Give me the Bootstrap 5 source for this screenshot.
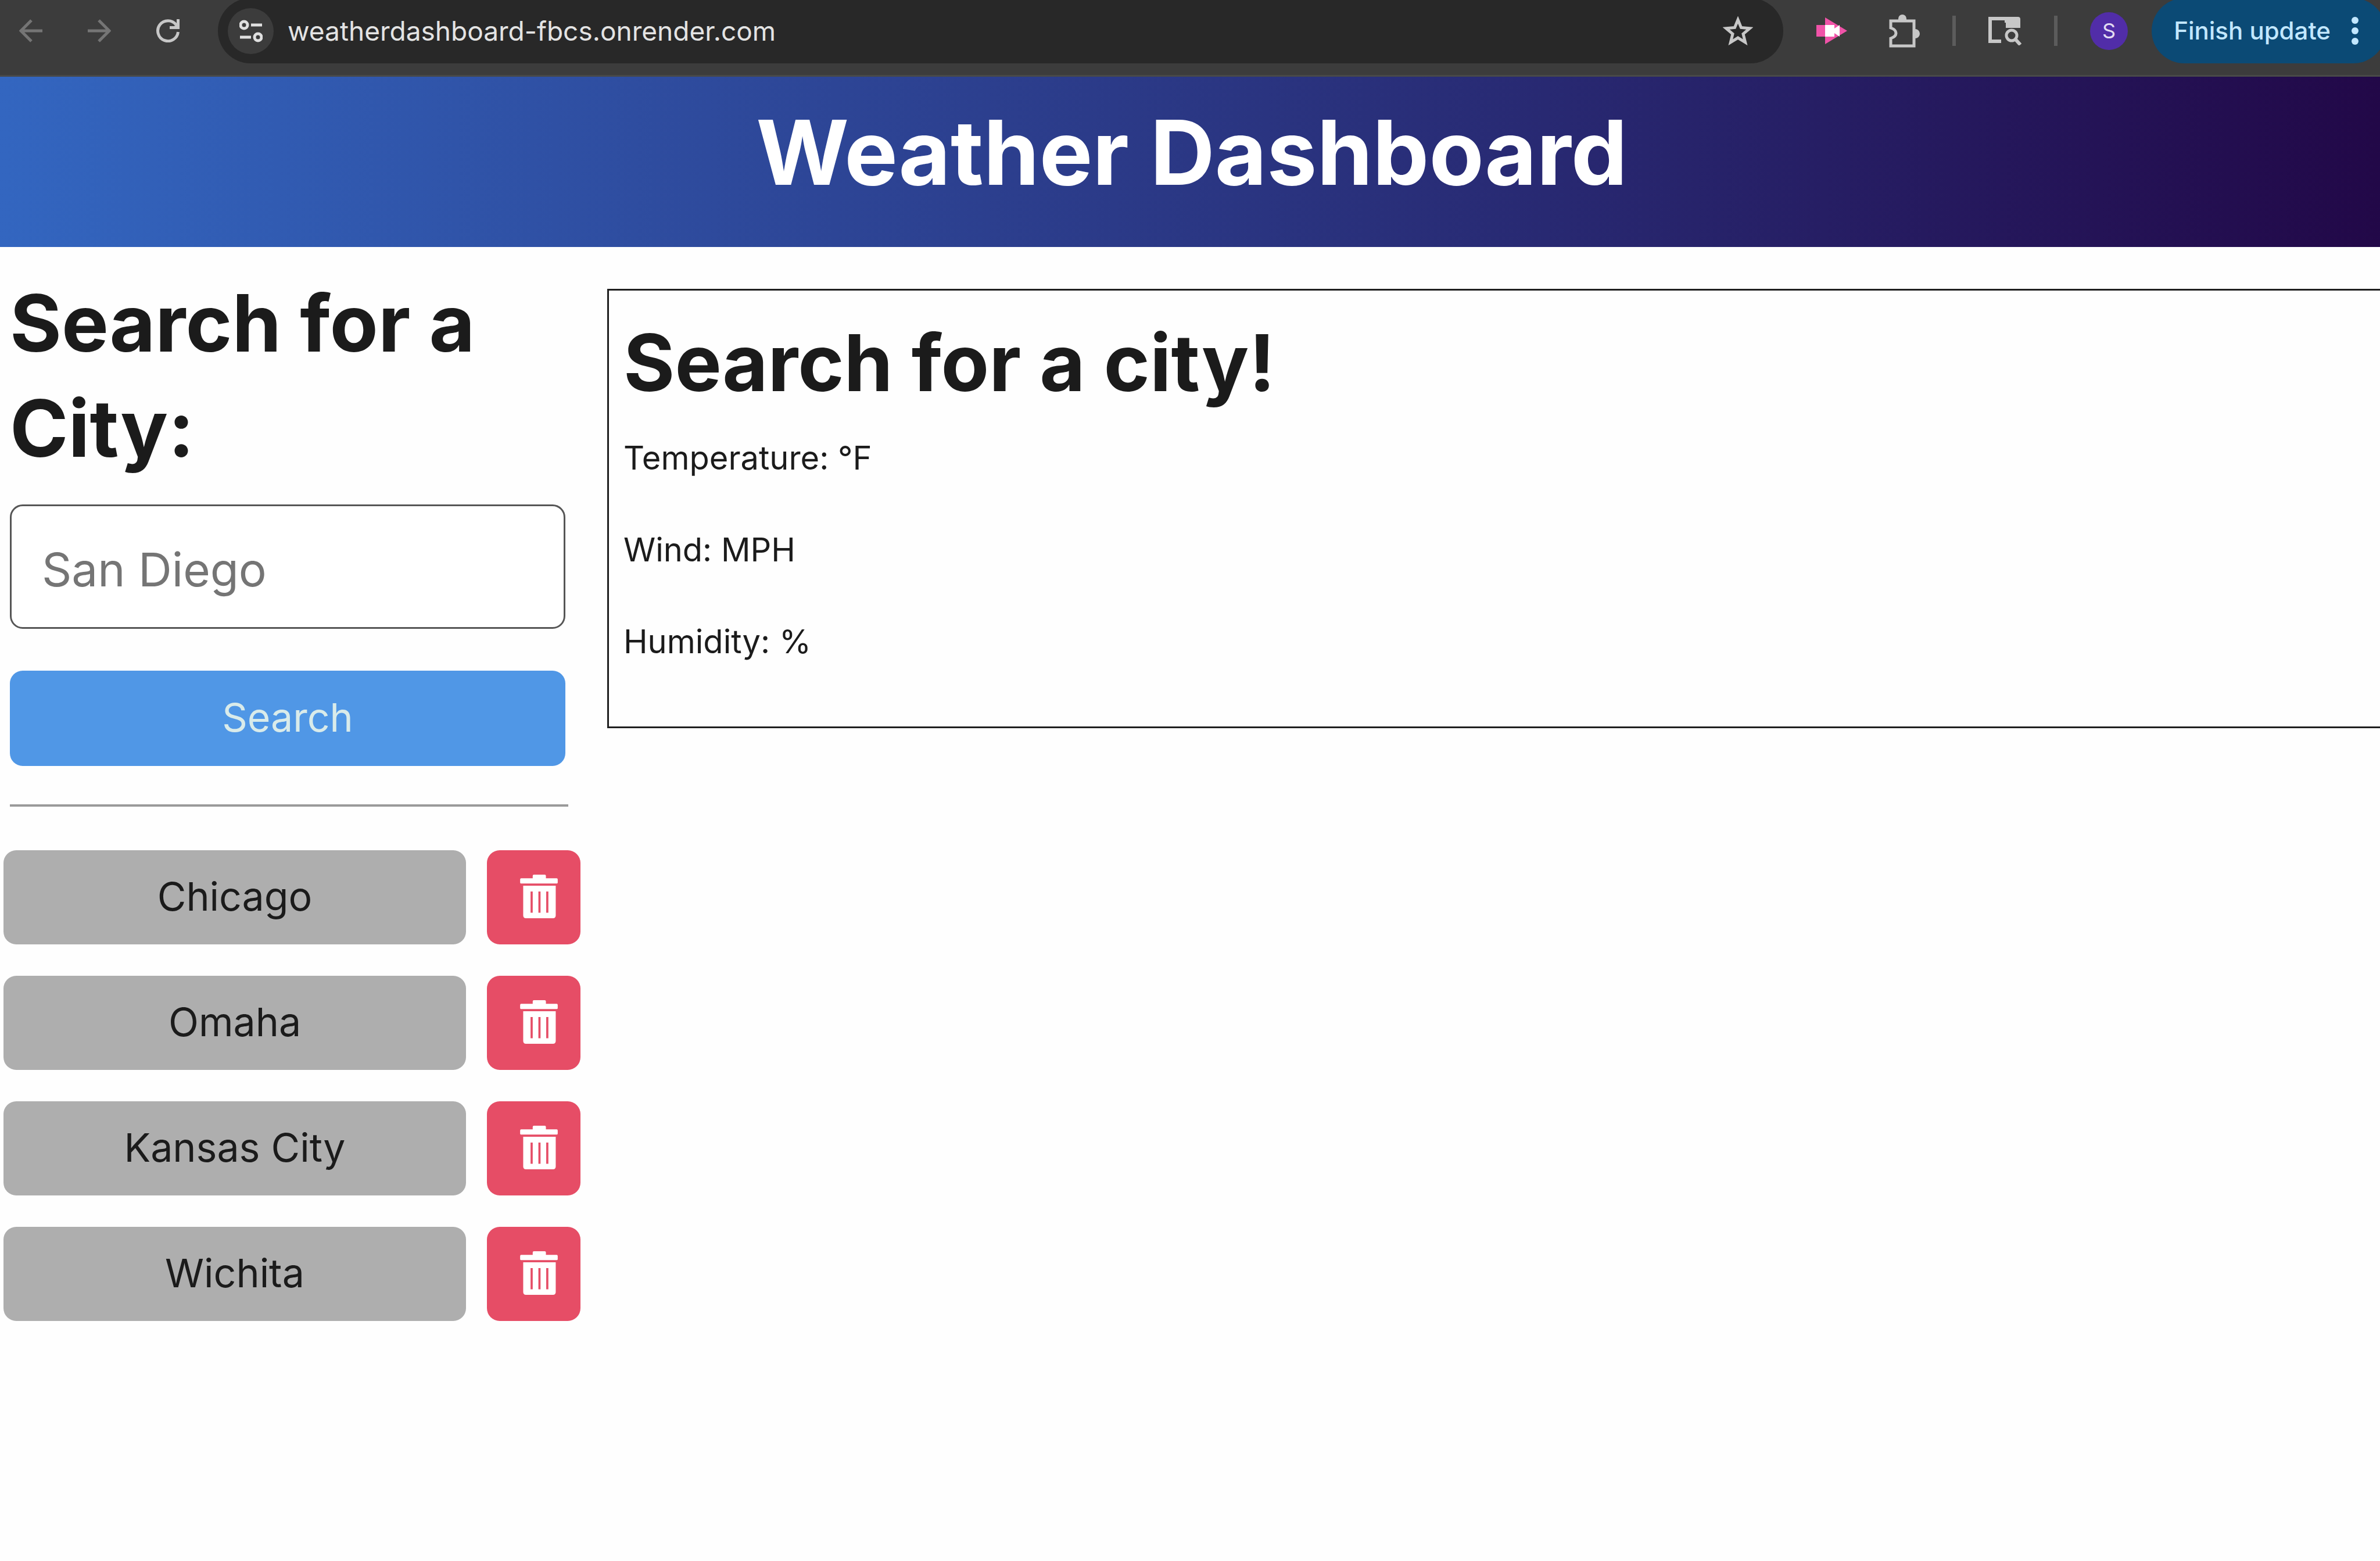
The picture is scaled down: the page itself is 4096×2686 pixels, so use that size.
<!DOCTYPE html>
<html lang="en">
<head>
<meta charset="utf-8">
<meta name="viewport" content="width=device-width, initial-scale=1">
<title>Weather Dashboard</title>
<link href="https://cdn.jsdelivr.net/npm/bootstrap@5.3.0/dist/css/bootstrap.min.css" rel="stylesheet">
<style>
  body { font-family: Inter, "Liberation Sans", sans-serif; color: #1b1b1b; background: #fefefe; }
  svg { display: block; }

  /* browser toolbar */
  .toolbar { background: #3c3c3c; border-bottom: 3px solid #484948; padding-bottom: 20px; }
  .toolbar-row { height: 112px; margin-top: -3px; padding-left: 33px; }
  .tool-btn { background: none; border: 0; padding: 0; flex: none; color: #c7c7c7; }
  .tool-btn.dim { color: #757575; }
  .nav-tools { gap: 78px; margin-right: 66px; }
  .address { height: 112px; border-radius: 56px; background: #282828; padding: 0 52px 0 17px; gap: 24px; }
  .site-info { width: 79px; height: 79px; border-radius: 50%; background: #3c3c3c; color: #e0e0e0; }
  .address input { min-width: 0; background: none; border: 0; padding: 0; outline: 0; color: #e3e3e3; font-size: 46px; line-height: 60px; }
  .ext-tools { gap: 56px; margin-left: 57px; margin-right: 41px; }
  .tool-sep { width: 6px; height: 52px; background: #5c5c5c; }
  .avatar { width: 65px; height: 65px; border-radius: 50%; background: #512da8; color: #e2dcf2; font-size: 36px; line-height: 65px; }
  .update { height: 112px; border: 0; border-radius: 56px; background: #0b4a75; color: #c2e7ff; font-size: 42px; font-weight: 500; line-height: 60px; padding: 0 47px 0 38px; gap: 36px; margin-right: -10px; }

  /* page */
  .hero { background: linear-gradient(90deg, #3366c0, #220848); padding: 38px 0 71px 6px; }
  .hero h1 { font-size: 154px; line-height: 184px; font-weight: 700; color: #fff; }
  .side { padding: 40px 25px 0 6px; }
  .side form { padding: 0 26px 0 11px; }
  .side h2 { font-size: 136px; line-height: 181px; font-weight: 700; margin-bottom: 41px; }
  .city-input { height: 214px; border: 3px solid #565656; border-radius: 22px; padding: 8px 52px 0; font-size: 80px; line-height: 100px; margin-bottom: 72px; background: #fff; }
  .city-input::placeholder { color: #757575; opacity: 1; }
  .big-btn { border: 0; border-radius: 22px; font-size: 68px; line-height: 84px; height: 162px; padding: 0 0 4px; }
  .find-btn, .find-btn:hover { height: 164px; background: #5097e6; color: #d9ebea; }
  .side hr { margin: 66px 21px 75px 11px; border: 0; height: 4px; background: #9a9a9a; opacity: 1; }
  .past { gap: 54px; }
  .past-row { gap: 36px; }
  .city-btn, .city-btn:hover { background: #aeaeae; color: #1b1b1b; }
  .trash-btn, .trash-btn:hover { width: 161px; flex: none; background: #e64d66; color: #fff; padding-left: 18px; }
  .today { margin: 72px 0 0 21px; border: 3px solid #1f1f1f; border-right: 0; padding: 40px 25px 30px; }
  .today h2 { font-size: 135px; line-height: 168px; font-weight: 700; margin-bottom: 38px; }
  .today p { font-size: 56px; line-height: 84px; margin-bottom: 74px; }
</style>
<script src="https://cdn.jsdelivr.net/npm/bootstrap@5.3.0/dist/js/bootstrap.bundle.min.js" defer></script>
</head>
<body>

<svg width="0" height="0" class="position-absolute" aria-hidden="true">
  <symbol id="trash" viewBox="0 0 245 284">
    <path fill="currentColor" fill-rule="evenodd" d="M82 24V8q0-8 8-8h70q8 0 8 8v16h70q7 0 7 7v20q0 7-7 7H7q-7 0-7-7V31q0-7 7-7zM20 72h212v194q0 18-18 18H38q-18 0-18-18zM68 110v138h14V110zM119 110v138h14V110zM170 110v138h14V110z"/>
  </symbol>
</svg>

<div class="toolbar overflow-hidden">
  <div class="toolbar-row d-flex align-items-center">
    <div class="nav-tools d-flex align-items-center">
      <button class="tool-btn dim" type="button" aria-label="Back">
        <svg width="40" height="40" viewBox="0 0 40 40" fill="none" stroke="currentColor" stroke-width="5"><path d="M40 20H4M21 2 3 20l18 18"/></svg>
      </button>
      <button class="tool-btn dim" type="button" aria-label="Forward">
        <svg width="40" height="40" viewBox="0 0 40 40" fill="none" stroke="currentColor" stroke-width="5"><path d="M0 20h36M19 2l18 18-18 18"/></svg>
      </button>
      <button class="tool-btn" type="button" aria-label="Reload">
        <svg width="40" height="40" viewBox="0 0 40 40"><path d="M37.500 22A17.500 17.500 0 1 1 34 9.500" fill="none" stroke="currentColor" stroke-width="5"/><path d="M40 0v17H23v-5h8l4-4V0z" fill="currentColor"/></svg>
      </button>
    </div>

    <div class="address d-flex align-items-center flex-grow-1">
      <button class="tool-btn site-info d-flex align-items-center justify-content-center" type="button" aria-label="Site information">
        <svg width="40" height="40" viewBox="0 0 40 40" fill="none" stroke="currentColor" stroke-width="5"><circle cx="8" cy="10" r="6"/><path d="M20 10h19M1 31h19"/><circle cx="32" cy="31" r="6"/></svg>
      </button>
      <input class="flex-grow-1" type="text" value="weatherdashboard-fbcs.onrender.com" aria-label="Address">
      <button class="tool-btn" type="button" aria-label="Bookmark">
        <svg width="52" height="50" viewBox="0 0 52 50" fill="none" stroke="currentColor" stroke-width="5"><path d="m26 6 5.500 13.500 15 1.200-11.500 9.600 3.600 14.500L26 37l-12.600 7.800L17 30.300 5.500 20.700l15-1.200z"/></svg>
      </button>
    </div>

    <div class="ext-tools d-flex align-items-center">
      <button class="tool-btn" type="button" aria-label="Screen recorder">
        <svg width="53" height="46" viewBox="0 0 53 46"><path d="M0 13h15V0l38 23-38 23V33H0z" fill="#f053a8"/><path d="M15 13h16v6l9-6v20l-9-6v6H15z" fill="#fff"/></svg>
      </button>
      <button class="tool-btn ps-3" type="button" aria-label="Extensions">
        <svg width="53" height="58" viewBox="0 0 53 58"><path d="M3 12h40v43H3V42q9-3 9-9t-9-9z" fill="none" stroke="currentColor" stroke-width="5"/><path d="M16 10V8a7 7 0 0 1 14 0v2zM45 26a8 8 0 0 1 0 16z" fill="currentColor"/></svg>
      </button>
      <span class="tool-sep"></span>
      <button class="tool-btn" type="button" aria-label="Search tabs">
        <svg width="57" height="50" viewBox="0 0 57 50"><path d="M22 43H3V4h28" fill="none" stroke="currentColor" stroke-width="6"/><path d="M28 1h23q4 0 4 4v15H30v-9h-2z" fill="currentColor"/><circle cx="40" cy="33" r="9" fill="none" stroke="currentColor" stroke-width="5"/><path d="m46 39 9 10" stroke="currentColor" stroke-width="6"/></svg>
      </button>
      <span class="tool-sep"></span>
      <button class="tool-btn avatar text-center" type="button" aria-label="Profile S">S</button>
    </div>

    <button class="update d-flex align-items-center flex-shrink-0 text-nowrap" type="button">
      Finish update
      <svg width="12" height="48" viewBox="0 0 12 48" fill="currentColor"><circle cx="6" cy="6" r="6"/><circle cx="6" cy="24" r="6"/><circle cx="6" cy="42" r="6"/></svg>
    </button>
  </div>
</div>

<header class="hero text-center">
  <h1 class="m-0">Weather Dashboard</h1>
</header>

<main class="row g-0 overflow-hidden">
  <aside class="side col-3">
    <form>
      <h2><label for="city">Search for a City:</label></h2>
      <input class="city-input form-control" id="city" type="text" placeholder="San Diego">
      <button class="btn big-btn find-btn w-100" type="button">Search</button>
    </form>
    <hr>
    <div class="past d-flex flex-column">
      <div class="past-row d-flex">
        <button class="btn big-btn city-btn flex-grow-1" type="button">Chicago</button>
        <button class="btn big-btn trash-btn d-flex align-items-center justify-content-center" type="button" aria-label="Delete Chicago"><svg width="65" height="75"><use href="#trash"/></svg></button>
      </div>
      <div class="past-row d-flex">
        <button class="btn big-btn city-btn flex-grow-1" type="button">Omaha</button>
        <button class="btn big-btn trash-btn d-flex align-items-center justify-content-center" type="button" aria-label="Delete Omaha"><svg width="65" height="75"><use href="#trash"/></svg></button>
      </div>
      <div class="past-row d-flex">
        <button class="btn big-btn city-btn flex-grow-1" type="button">Kansas City</button>
        <button class="btn big-btn trash-btn d-flex align-items-center justify-content-center" type="button" aria-label="Delete Kansas City"><svg width="65" height="75"><use href="#trash"/></svg></button>
      </div>
      <div class="past-row d-flex">
        <button class="btn big-btn city-btn flex-grow-1" type="button">Wichita</button>
        <button class="btn big-btn trash-btn d-flex align-items-center justify-content-center" type="button" aria-label="Delete Wichita"><svg width="65" height="75"><use href="#trash"/></svg></button>
      </div>
    </div>
  </aside>

  <div class="col-9">
    <section class="today">
      <h2>Search for a city!</h2>
      <p>Temperature: °F</p>
      <p>Wind: MPH</p>
      <p>Humidity: %</p>
    </section>
  </div>
</main>

</body>
</html>
